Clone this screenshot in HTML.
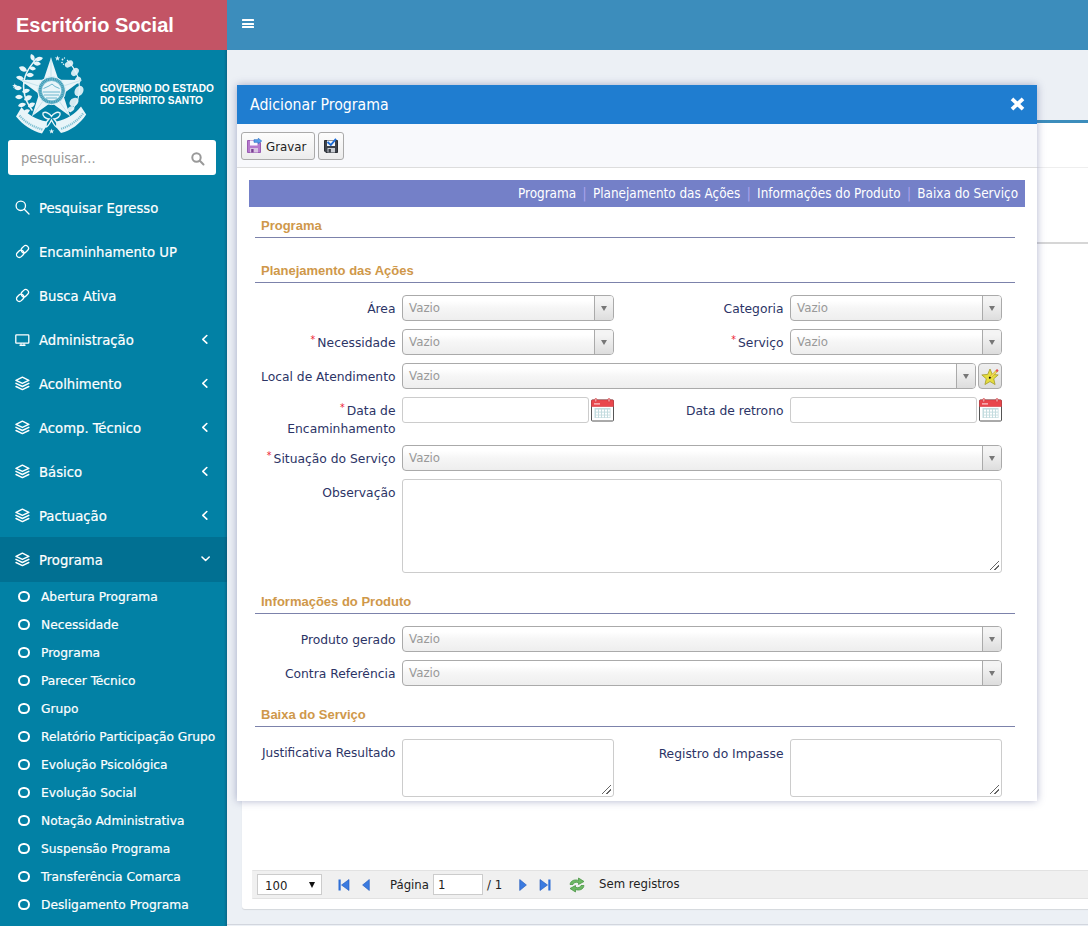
<!DOCTYPE html>
<html lang="pt-br">
<head>
<meta charset="utf-8">
<title>Escritório Social</title>
<style>
*{box-sizing:border-box;margin:0;padding:0}
html,body{width:1088px;height:926px;overflow:hidden}
body{position:relative;background:#ecf0f5;font-family:"DejaVu Sans Condensed","Liberation Sans",sans-serif;font-size:13.5px;color:#333}
.abs{position:absolute}
/* header */
#logo{position:absolute;left:0;top:0;width:227px;height:50px;background:#c35465;color:#fff;font-family:"Liberation Sans",sans-serif;font-weight:bold;font-size:20px;line-height:50px;padding-left:16px;white-space:nowrap}
#navbar{position:absolute;left:227px;top:0;width:861px;height:50px;background:#3c8dbc}
#navbar .bars{position:absolute;left:15px;top:19px;width:12px;height:10px}
#navbar .bars i{display:block;height:2.2px;background:#fff;margin-bottom:1.4px;border-radius:.5px}
/* sidebar */
#sidebar{position:absolute;left:0;top:50px;width:227px;height:876px;background:#0281a5;color:#fff;overflow:hidden}
#gov{position:absolute;left:100px;top:32px;font-family:"Liberation Sans",sans-serif;font-weight:bold;font-size:11.7px;line-height:12px;white-space:nowrap;color:#fff;transform:scaleX(.865);transform-origin:0 0}
#search{position:absolute;left:8px;top:90px;width:208px;height:35px;background:#fff;border-radius:3px}
#search span{position:absolute;left:13px;top:1px;line-height:35px;font-size:14.5px;color:#999}
#search svg{position:absolute;left:182.500px;top:12px}
.mi{position:absolute;left:0;width:227px;height:44px;line-height:44px;font-size:14.7px;white-space:nowrap}
.mi .t{position:absolute;left:39px;top:1px;-webkit-text-stroke:.2px #fff}
.mi svg.ic{position:absolute;left:15px;top:15px}
.mi svg.ch{position:absolute;left:201px;top:17px}
.mi.active{background:#017092;height:45px}
.si{position:absolute;left:0;width:227px;height:28px;line-height:28px;font-size:13.6px;white-space:nowrap}
.si .t{position:absolute;left:41px;top:0;-webkit-text-stroke:.2px #fff;transform:scaleY(.94);transform-origin:0 18.7px}
.si .c{position:absolute;left:18px;top:8.500px;width:11.500px;height:11.500px;border:2.300px solid #fff;border-radius:50%}
/* background box */
#box{position:absolute;left:242px;top:120px;width:900px;height:789px;background:#fff;border-top:3px solid #3c8dbc;border-radius:3px;box-shadow:0 1px 1px rgba(0,0,0,.1)}
#boxline{position:absolute;left:242px;top:242px;width:900px;height:2px;background:#d6d6d6}
#pager{position:absolute;left:252px;top:870px;width:900px;height:29px;background:#f0f0f0;border:1px solid #e2e2e2;border-left-color:#f0f0f0;font-size:13px;color:#222}
#footerline{position:absolute;left:227px;top:924px;width:861px;height:1px;background:#d2d6de}
/* modal */
#modal{position:absolute;left:237px;top:85px;width:800px;height:716px;background:#fff;box-shadow:0 0 8px rgba(60,68,130,.4);overflow:hidden}
#mhead{position:absolute;left:0;top:0;width:800px;height:39px;background:#1f7dd0;color:#fff;font-size:15.7px;line-height:40px;padding-left:13px}
#mtool{position:absolute;left:0;top:39px;width:800px;height:44px;background:#f8f9fc;border-bottom:1px solid #ddd}
.btn{position:absolute;top:8px;height:28px;border:1px solid #aaa;border-radius:3px;background:linear-gradient(#fdfdfd,#ececec);font-size:13.5px;line-height:26px;color:#222}
#mnav{position:absolute;left:12px;top:95px;width:776px;height:27px;background:#7480c8;color:#fff;font-size:13.4px;line-height:27px;text-align:right;padding-right:7px;white-space:nowrap}
#mnav b{font-weight:normal;color:#aca4ee;padding:0 6.4px}
.sec{position:absolute;left:18px;width:760px;height:24px;border-bottom:1px solid #7c82ab;color:#cf984a;font-family:"Liberation Sans",sans-serif;font-weight:bold;font-size:13px;line-height:24px;padding-left:6px;white-space:nowrap}
.lbl{position:absolute;text-align:right;color:#2c3466;font-size:13.7px;line-height:18px;white-space:nowrap;transform:scaleY(.94);transform-origin:0 13.7px}
.lbl em{font-style:normal;color:#e23;font-size:10.5px;line-height:0;position:relative;top:-4px;margin-right:2px}
.sel{position:absolute;height:26px;border:1px solid #aaa;border-radius:4px;background:linear-gradient(#fff 20%,#f6f6f6 50%,#eee 100%);font-family:"DejaVu Sans","Liberation Sans",sans-serif;font-size:11.8px;line-height:24px;color:#999;padding-left:6px;overflow:hidden}
.sel:after{content:"";position:absolute;right:0;top:0;width:18.5px;height:24px;border-left:1px solid #aaa;background:linear-gradient(#f4f4f4 20%,#ddd 100%)}
.sel:before{content:"";position:absolute;right:6.5px;top:10px;border:3.5px solid transparent;border-top:5px solid #777;border-bottom:0;z-index:2}
.inp{position:absolute;border:1px solid #ccc;border-radius:3px;background:#fff}

.ta:after{content:"";position:absolute;right:2px;bottom:2px;width:9px;height:9px;background:linear-gradient(135deg,transparent 0,transparent 46%,#666 46%,#666 54%,transparent 54%,transparent 71%,#666 71%,#666 79%,transparent 79%)}
.starbtn{position:absolute;width:24px;height:26px;border:1px solid #aaa;border-radius:4px;background:linear-gradient(#efefef,#dcdcdc)}
.cal{position:absolute;width:23px;height:23px}
</style>
</head>
<body>
<div id="logo">Escritório Social</div>
<div id="navbar"><div class="bars"><i></i><i></i><i></i></div></div>
<div id="sidebar">
<!--LOGO-->
<svg id="coat" class="abs" style="left:5px;top:0" width="90" height="90" viewBox="0 0 90 90">
<g fill="none" stroke="#e9f5f9" stroke-linecap="round">
<path d="M27 60C18 48 16 34 22 22C25 16 28 13 31 9" stroke-width="1.6"/>
</g>
<path d="M30 10Q35.1 13.4 38 8Q32.9 4.6 30 10z" fill="#e9f5f9"/>
<path d="M28 13Q31.4 17.9 36 14Q32.5 9.1 28 13z" fill="#e9f5f9"/>
<path d="M29 11Q31.4 5.8 26 4Q23.6 9.2 29 11z" fill="#e9f5f9"/>
<path d="M24 18Q26.9 22.4 31 19Q28.1 14.6 24 18z" fill="#e9f5f9"/>
<path d="M22 21Q20.2 14.6 14 17Q15.8 23.4 22 21z" fill="#e9f5f9"/>
<path d="M21 25Q25.0 29.4 29 25Q25.0 20.6 21 25z" fill="#e9f5f9"/>
<path d="M19 29Q16.1 23.6 11 27Q13.9 32.4 19 29z" fill="#e9f5f9"/>
<path d="M18 33Q23.1 36.4 26 31Q20.9 27.6 18 33z" fill="#e9f5f9"/>
<path d="M17 38Q13.0 33.6 9 38Q13.0 42.4 17 38z" fill="#e9f5f9"/>
<path d="M17 42Q22.1 45.4 25 40Q19.9 36.6 17 42z" fill="#e9f5f9"/>
<path d="M18 47Q14.0 42.6 10 47Q14.0 51.4 18 47z" fill="#e9f5f9"/>
<path d="M19 50Q25.2 52.4 27 46Q20.8 43.6 19 50z" fill="#e9f5f9"/>
<path d="M21 54Q15.9 50.6 13 56Q18.1 59.4 21 54z" fill="#e9f5f9"/>
<path d="M23 57Q28.7 58.9 30 53Q24.3 51.1 23 57z" fill="#e9f5f9"/>
<path d="M25 60Q19.9 57.6 18 63Q23.1 65.3 25 60z" fill="#e9f5f9"/>
<ellipse cx="64" cy="14" rx="4.5" ry="3" transform="rotate(-30 64 14)" fill="#e9f5f9" opacity=".9"/>
<ellipse cx="70" cy="22" rx="4.5" ry="3.2" transform="rotate(-50 70 22)" fill="#e9f5f9" opacity=".9"/>
<ellipse cx="73" cy="30" rx="3.5" ry="3" transform="rotate(-70 73 30)" fill="#e9f5f9" opacity=".9"/>
<ellipse cx="74" cy="41" rx="5.5" ry="4.2" transform="rotate(-60 74 41)" fill="#e9f5f9" opacity=".9"/>
<ellipse cx="69" cy="52" rx="5" ry="3.8" transform="rotate(-40 69 52)" fill="#e9f5f9" opacity=".9"/>
<ellipse cx="66" cy="59" rx="3.5" ry="2.5" transform="rotate(-30 66 59)" fill="#e9f5f9" opacity=".9"/>
<path d="M62 10C70 18 76 30 74 44C73 52 69 58 65 62" fill="none" stroke="#e9f5f9" stroke-width="1.1"/>
<polygon points="46.00,7.50 53.41,29.81 76.91,29.96 57.98,43.89 65.10,66.29 46.00,52.60 26.90,66.29 34.02,43.89 15.09,29.96 38.59,29.81" fill="#e9f5f9"/>
<path d="M46 40L46.00 7.50" stroke="#9fd0df" stroke-width=".5"/>
<path d="M46 40L76.91 29.96" stroke="#9fd0df" stroke-width=".5"/>
<path d="M46 40L65.10 66.29" stroke="#9fd0df" stroke-width=".5"/>
<path d="M46 40L26.90 66.29" stroke="#9fd0df" stroke-width=".5"/>
<path d="M46 40L15.09 29.96" stroke="#9fd0df" stroke-width=".5"/>
<circle cx="46.6" cy="40.6" r="14" fill="#7dbfd2" stroke="#e9f5f9" stroke-width="1"/>
<circle cx="46.6" cy="40.6" r="11.6" fill="none" stroke="#3c9ab5" stroke-width="2.6" stroke-dasharray="1.1 0.7"/>
<circle cx="46.6" cy="40.6" r="9.6" fill="#e9f5f9"/>
<path d="M38.5 38.5L44 36L47 34L50 36.500L54.500 38.5M38 42h17M39 45h15M41 48h11" stroke="#5fb0c8" stroke-width=".9" fill="none"/>
<path d="M11 66.5L16.5 57.2C22 64 31 69.500 42 71.500L41.5 76L37 83.500C27 81 18 75 11 66.500z" fill="#e9f5f9"/>
<path d="M81.2 64.5L76 56.500C70 64 62 69.500 51.500 71.500L51 77L56 83C66 80.500 75 74 81.200 64.500z" fill="#e9f5f9"/>
<path d="M14.5 65.5C20 72 28 77 37.5 79.500" fill="none" stroke="#7dbfd2" stroke-width="2.2" stroke-dasharray="1.2 .8"/>
<path d="M78 63.500C73 70.500 65 76 55.500 79" fill="none" stroke="#7dbfd2" stroke-width="2.2" stroke-dasharray="1.2 .8"/>
<path d="M38 63C41 61 45 64 46.500 66.500C48 64 52 61 55 63C56 66 52 69 49 69C51 71 53 74 52 77C50 77 48 73 46.500 70C45 73 43 77 41 77C40 74 42 71 44 69C41 69 37 66 38 63z" fill="none" stroke="#e9f5f9" stroke-width="1.4"/>
<polygon points="52.50,5.60 53.15,7.51 55.16,7.53 53.55,8.74 54.15,10.67 52.50,9.50 50.85,10.67 51.45,8.74 49.84,7.53 51.85,7.51" fill="#e9f5f9"/>
<polygon points="9.80,33.20 10.45,35.11 12.46,35.13 10.85,36.34 11.45,38.27 9.80,37.10 8.15,38.27 8.75,36.34 7.14,35.13 9.15,35.11" fill="#e9f5f9"/>
<polygon points="46.60,78.50 47.25,80.41 49.26,80.43 47.65,81.64 48.25,83.57 46.60,82.40 44.95,83.57 45.55,81.64 43.94,80.43 45.95,80.41" fill="#e9f5f9"/>
<circle cx="57.5" cy="9.500" r=".9" fill="#e9f5f9"/><circle cx="59.500" cy="8" r=".7" fill="#e9f5f9"/><circle cx="57" cy="12.500" r=".8" fill="#e9f5f9"/><circle cx="58.500" cy="14.200" r=".7" fill="#e9f5f9"/>
</svg>
<!--/LOGO-->
<div id="gov">GOVERNO DO ESTADO<br>DO ESPÍRITO SANTO</div>
<div id="search"><span>pesquisar...</span><svg width="14" height="14" viewBox="0 0 14 14" fill="none" stroke="#999" stroke-width="2" stroke-linecap="round"><circle cx="5.500" cy="5.500" r="4.200"/><path d="M8.800 8.800L12.500 12.500"/></svg></div>
<!--SIDE-->
<div class="mi" style="top:135px"><svg class="ic" width="15" height="15" viewBox="0 0 15 15" fill="none" stroke="#fff" stroke-width="1.3" stroke-linecap="round"><circle cx="5.8" cy="5.8" r="4.7"/><path d="M9.3 9.3L14 14"/></svg><span class="t">Pesquisar Egresso</span></div>
<div class="mi" style="top:179px"><svg class="ic" width="15" height="15" viewBox="0 0 15 15" fill="none" stroke="#fff" stroke-width="1.3" stroke-linecap="round"><g transform="rotate(-45 7.5 7.5)"><rect x="0.2" y="4.7" width="8" height="5.6" rx="2.8"/><rect x="6.8" y="4.7" width="8" height="5.6" rx="2.8"/></g></svg><span class="t">Encaminhamento UP</span></div>
<div class="mi" style="top:223px"><svg class="ic" width="15" height="15" viewBox="0 0 15 15" fill="none" stroke="#fff" stroke-width="1.3" stroke-linecap="round"><g transform="rotate(-45 7.5 7.5)"><rect x="0.2" y="4.7" width="8" height="5.6" rx="2.8"/><rect x="6.8" y="4.7" width="8" height="5.6" rx="2.8"/></g></svg><span class="t">Busca Ativa</span></div>
<div class="mi" style="top:267px"><svg class="ic" width="15" height="15" viewBox="0 0 15 15" fill="none" stroke="#fff" stroke-width="1.3" stroke-linejoin="round"><rect x="0.8" y="2.8" width="13" height="8.4" rx="0.6"/><path d="M4.5 13.3h6" stroke-width="1.5"/><path d="M6 11.2v2M9 11.2v2" stroke-width="1"/></svg><span class="t">Administração</span><svg class="ch" style="left:201px;top:17px" width="8" height="10" viewBox="0 0 8 10" fill="none" stroke="#fff" stroke-width="1.600" stroke-linecap="round" stroke-linejoin="round"><path d="M5.800 1.500L1.800 5.300L5.800 9.100"/></svg></div>
<div class="mi" style="top:311px"><svg class="ic" width="15" height="15" viewBox="0 0 15 15" fill="none" stroke="#fff" stroke-width="1.500" stroke-linejoin="round" stroke-linecap="round"><path d="M7.4 1.2L13.8 4.3L7.4 7.4L1 4.3Z"/><path d="M1 7.4L7.4 10.5L13.8 7.4"/><path d="M1 10.5L7.4 13.6L13.8 10.5"/></svg><span class="t">Acolhimento</span><svg class="ch" style="left:201px;top:17px" width="8" height="10" viewBox="0 0 8 10" fill="none" stroke="#fff" stroke-width="1.600" stroke-linecap="round" stroke-linejoin="round"><path d="M5.800 1.500L1.800 5.300L5.800 9.100"/></svg></div>
<div class="mi" style="top:355px"><svg class="ic" width="15" height="15" viewBox="0 0 15 15" fill="none" stroke="#fff" stroke-width="1.500" stroke-linejoin="round" stroke-linecap="round"><path d="M7.4 1.2L13.8 4.3L7.4 7.4L1 4.3Z"/><path d="M1 7.4L7.4 10.5L13.8 7.4"/><path d="M1 10.5L7.4 13.6L13.8 10.5"/></svg><span class="t">Acomp. Técnico</span><svg class="ch" style="left:201px;top:17px" width="8" height="10" viewBox="0 0 8 10" fill="none" stroke="#fff" stroke-width="1.600" stroke-linecap="round" stroke-linejoin="round"><path d="M5.800 1.500L1.800 5.300L5.800 9.100"/></svg></div>
<div class="mi" style="top:399px"><svg class="ic" width="15" height="15" viewBox="0 0 15 15" fill="none" stroke="#fff" stroke-width="1.500" stroke-linejoin="round" stroke-linecap="round"><path d="M7.4 1.2L13.8 4.3L7.4 7.4L1 4.3Z"/><path d="M1 7.4L7.4 10.5L13.8 7.4"/><path d="M1 10.5L7.4 13.6L13.8 10.5"/></svg><span class="t">Básico</span><svg class="ch" style="left:201px;top:17px" width="8" height="10" viewBox="0 0 8 10" fill="none" stroke="#fff" stroke-width="1.600" stroke-linecap="round" stroke-linejoin="round"><path d="M5.800 1.500L1.800 5.300L5.800 9.100"/></svg></div>
<div class="mi" style="top:443px"><svg class="ic" width="15" height="15" viewBox="0 0 15 15" fill="none" stroke="#fff" stroke-width="1.500" stroke-linejoin="round" stroke-linecap="round"><path d="M7.4 1.2L13.8 4.3L7.4 7.4L1 4.3Z"/><path d="M1 7.4L7.4 10.5L13.8 7.4"/><path d="M1 10.5L7.4 13.6L13.8 10.5"/></svg><span class="t">Pactuação</span><svg class="ch" style="left:201px;top:17px" width="8" height="10" viewBox="0 0 8 10" fill="none" stroke="#fff" stroke-width="1.600" stroke-linecap="round" stroke-linejoin="round"><path d="M5.800 1.500L1.800 5.300L5.800 9.100"/></svg></div>
<div class="mi active" style="top:487px"><svg class="ic" width="15" height="15" viewBox="0 0 15 15" fill="none" stroke="#fff" stroke-width="1.500" stroke-linejoin="round" stroke-linecap="round"><path d="M7.4 1.2L13.8 4.3L7.4 7.4L1 4.3Z"/><path d="M1 7.4L7.4 10.5L13.8 7.4"/><path d="M1 10.5L7.4 13.6L13.8 10.5"/></svg><span class="t">Programa</span><svg class="ch" style="left:200px;top:18px" width="11" height="8" viewBox="0 0 11 8" fill="none" stroke="#fff" stroke-width="1.600" stroke-linecap="round" stroke-linejoin="round"><path d="M2 2L5.600 5.500L9.200 2"/></svg></div>
<div class="si" style="top:532px"><i class="c"></i><span class="t">Abertura Programa</span></div>
<div class="si" style="top:560px"><i class="c"></i><span class="t">Necessidade</span></div>
<div class="si" style="top:588px"><i class="c"></i><span class="t">Programa</span></div>
<div class="si" style="top:616px"><i class="c"></i><span class="t">Parecer Técnico</span></div>
<div class="si" style="top:644px"><i class="c"></i><span class="t">Grupo</span></div>
<div class="si" style="top:672px"><i class="c"></i><span class="t">Relatório Participação Grupo</span></div>
<div class="si" style="top:700px"><i class="c"></i><span class="t">Evolução Psicológica</span></div>
<div class="si" style="top:728px"><i class="c"></i><span class="t">Evolução Social</span></div>
<div class="si" style="top:756px"><i class="c"></i><span class="t">Notação Administrativa</span></div>
<div class="si" style="top:784px"><i class="c"></i><span class="t">Suspensão Programa</span></div>
<div class="si" style="top:812px"><i class="c"></i><span class="t">Transferência Comarca</span></div>
<div class="si" style="top:840px"><i class="c"></i><span class="t">Desligamento Programa</span></div>
<!--/SIDE-->
</div>
<div class="abs" style="left:224px;top:50px;width:3px;height:876px;background:linear-gradient(90deg,rgba(20,60,90,0),rgba(20,60,90,.38))"></div>
<div id="box"></div>
<div id="boxline"></div>
<div class="abs" style="left:242px;top:167px;width:900px;height:1px;background:#eee"></div>
<div id="pager">
<div class="abs" style="left:4px;top:3px;width:65px;height:21px;background:#fff;border:1px solid #ccc"><span class="abs" style="left:7px;top:0;line-height:21px">100</span><i class="abs" style="left:51px;top:7px;border:3.5px solid transparent;border-top:6px solid #111;border-bottom:0"></i></div>
<svg class="abs" style="left:85px;top:8px" width="12" height="12" viewBox="0 0 12 12"><rect x="0.5" y="0.5" width="2.2" height="11" fill="#2f6fd6"/><path d="M11 0.5v11L3.5 6z" fill="#3b7be0" stroke="#1f56b8" stroke-width=".6"/></svg>
<svg class="abs" style="left:109px;top:8px" width="8" height="12" viewBox="0 0 8 12"><path d="M7.3 0.5v11L0.6 6z" fill="#3b7be0" stroke="#1f56b8" stroke-width=".6"/></svg>
<span class="abs" style="left:137px;top:0;line-height:27px">Página</span>
<div class="abs" style="left:180px;top:3px;width:50px;height:21px;background:#fff;border:1px solid #ccc"><span class="abs" style="left:4px;top:0;line-height:20px">1</span></div>
<span class="abs" style="left:234px;top:0;line-height:27px">/ 1</span>
<svg class="abs" style="left:266px;top:8px" width="8" height="12" viewBox="0 0 8 12"><path d="M0.7 0.5v11L7.4 6z" fill="#3b7be0" stroke="#1f56b8" stroke-width=".6"/></svg>
<svg class="abs" style="left:286px;top:8px" width="12" height="12" viewBox="0 0 12 12"><rect x="9.3" y="0.5" width="2.2" height="11" fill="#2f6fd6"/><path d="M1 0.5v11L8.5 6z" fill="#3b7be0" stroke="#1f56b8" stroke-width=".6"/></svg>
<svg class="abs" style="left:315px;top:6px" width="18" height="16" viewBox="0 0 18 16"><path d="M2 7.5C2.5 3.5 7 2 10.5 3.5V1L16 4.5L10.5 7.5V5.7C8 4.8 5.5 5.5 5 7.5z" fill="#6db864" stroke="#3f8f3a" stroke-width=".7"/><path d="M16 8.5C15.5 12.5 11 14 7.5 12.5V15L2 11.5L7.5 8.5V10.3C10 11.2 12.500 10.500 13 8.5z" fill="#6db864" stroke="#3f8f3a" stroke-width=".7"/></svg>
<span class="abs" style="left:346px;top:0;line-height:25px">Sem registros</span>
</div>
<div id="footerline"></div>
<div id="modal">
<div id="mhead">Adicionar Programa<svg class="abs" style="left:772.5px;top:11.5px" width="15" height="14" viewBox="0 0 15 14"><path d="M2 1.800L13 12.200M13 1.800L2 12.200" stroke="#fff" stroke-width="3.700" stroke-linecap="butt" stroke-linejoin="round"/></svg></div>
<div id="mtool">
<div class="btn" style="left:4px;width:74px"><svg class="abs" style="left:4px;top:5px" width="16" height="16" viewBox="0 0 16 16"><path d="M1.5 2.5H12l2.500 2.200V14.500H1.500z" fill="#b679cd" stroke="#9a5cb2" stroke-width="1"/><rect x="4" y="2.500" width="7.500" height="5" fill="#fbf6fd"/><rect x="4" y="10" width="8" height="4.500" fill="#d9c3e3"/><rect x="5.200" y="11" width="2.400" height="3.500" fill="#7a3f92"/><path d="M8 1.700h4.300V0.300L15.700 3L12.300 5.700V4.300H8z" fill="#58a0ea" stroke="#2f74c8" stroke-width=".7"/></svg><span class="abs" style="left:24px;top:1px;font-family:'DejaVu Sans','Liberation Sans',sans-serif;font-size:11.8px">Gravar</span></div>
<div class="btn" style="left:81px;width:26px"><svg class="abs" style="left:4px;top:5px" width="16" height="16" viewBox="0 0 16 16"><path d="M1.500 2.500H14.500V14.500H3L1.500 13z" fill="#3e434b" stroke="#2a2e34" stroke-width="1"/><rect x="4" y="2.500" width="8" height="5.500" fill="#f4f6f8"/><rect x="4.500" y="10" width="7.500" height="4.500" fill="#c9cdd3"/><rect x="5.500" y="11" width="2.400" height="3.500" fill="#3a3f46"/><path d="M4.500 4L7.800 7L13 0.800" fill="none" stroke="#1b6bd6" stroke-width="1.900"/></svg></div>
</div>
<div id="mnav">Programa<b>|</b>Planejamento das Ações<b>|</b>Informações do Produto<b>|</b>Baixa do Serviço</div>
<!--FORM-->
<div class="sec" style="top:129px">Programa</div>
<div class="sec" style="top:174px">Planejamento das Ações</div>
<div class="lbl" style="left:8.5px;width:150px;top:214px">Área</div>
<div class="sel" style="left:165px;top:210px;width:212px">Vazio</div>
<div class="lbl" style="left:396.5px;width:150px;top:214px">Categoria</div>
<div class="sel" style="left:553px;top:210px;width:212px">Vazio</div>
<div class="lbl" style="left:8.5px;width:150px;top:248px"><em>*</em>Necessidade</div>
<div class="sel" style="left:165px;top:244px;width:212px">Vazio</div>
<div class="lbl" style="left:396.5px;width:150px;top:248px"><em>*</em>Serviço</div>
<div class="sel" style="left:553px;top:244px;width:212px">Vazio</div>
<div class="lbl" style="left:8.5px;width:150px;top:282px">Local de Atendimento</div>
<div class="sel" style="left:165px;top:278px;width:574px">Vazio</div>
<div class="starbtn" style="left:741px;top:278px"><svg class="abs" style="left:2px;top:4px" width="19" height="18" viewBox="0 0 19 18"><polygon points="9.00,1.00 11.29,6.44 17.18,6.94 12.71,10.81 14.05,16.56 9.00,13.50 3.95,16.56 5.29,10.81 0.82,6.94 6.71,6.44" fill="#e6de3e" stroke="#a9a233" stroke-width=".9" stroke-linejoin="round"/><path d="M9 9.500L16.500 2.200" stroke="#c8a020" stroke-width="2.200"/><path d="M9.600 9L15.600 3.100" stroke="#f4e36a" stroke-width="1.100"/><path d="M15.300 3.400L16.900 1.800" stroke="#e8505a" stroke-width="2.200"/><circle cx="8.800" cy="9.800" r="1" fill="#111"/></svg></div>
<div class="lbl" style="left:8.5px;width:150px;top:316px"><em>*</em>Data de<br><span style="position:relative;top:1.2px">Encaminhamento</span></div>
<div class="inp" style="left:165px;top:312px;width:187px;height:26px"></div>
<div class="cal" style="left:354px;top:313px"><svg width="23" height="24" viewBox="0 0 23 24"><rect x="0.500" y="2" width="22" height="21" rx="1" fill="#fff" stroke="#555" stroke-width="1"/><path d="M0.500 3a1 1 0 0 1 1-1h20a1 1 0 0 1 1 1v5.500h-22z" fill="#e9474d" stroke="#d43a40" stroke-width=".6"/><rect x="3" y="5.300" width="6" height="1.200" fill="#fbd0d2"/><rect x="3.500" y="10" width="16" height="10" fill="#c4dcdf"/><g fill="#fff"><rect x="5" y="11.600" width="2" height="2"/><rect x="8" y="11.600" width="2" height="2"/><rect x="11" y="11.600" width="2" height="2"/><rect x="14" y="11.600" width="2" height="2"/><rect x="17" y="11.600" width="1.800" height="2"/><rect x="5" y="14.600" width="2" height="2"/><rect x="8" y="14.600" width="2" height="2"/><rect x="11" y="14.600" width="2" height="2"/><rect x="14" y="14.600" width="2" height="2"/><rect x="17" y="14.600" width="1.800" height="2"/><rect x="5" y="17.500" width="2" height="1.800"/><rect x="8" y="17.500" width="2" height="1.800"/><rect x="11" y="17.500" width="2" height="1.800"/><rect x="14" y="17.500" width="2" height="1.800"/><rect x="17" y="17.500" width="1.800" height="1.800"/></g><rect x="3.800" y="0.500" width="2" height="3.600" rx="1" fill="#f7b6b8" stroke="#d43a40" stroke-width=".7"/><rect x="17" y="0.500" width="2" height="3.600" rx="1" fill="#f7b6b8" stroke="#d43a40" stroke-width=".7"/></svg></div>
<div class="lbl" style="left:396.5px;width:150px;top:316px">Data de retrono</div>
<div class="inp" style="left:553px;top:312px;width:187px;height:26px"></div>
<div class="cal" style="left:742px;top:313px"><svg width="23" height="24" viewBox="0 0 23 24"><rect x="0.500" y="2" width="22" height="21" rx="1" fill="#fff" stroke="#555" stroke-width="1"/><path d="M0.500 3a1 1 0 0 1 1-1h20a1 1 0 0 1 1 1v5.500h-22z" fill="#e9474d" stroke="#d43a40" stroke-width=".6"/><rect x="3" y="5.300" width="6" height="1.200" fill="#fbd0d2"/><rect x="3.500" y="10" width="16" height="10" fill="#c4dcdf"/><g fill="#fff"><rect x="5" y="11.600" width="2" height="2"/><rect x="8" y="11.600" width="2" height="2"/><rect x="11" y="11.600" width="2" height="2"/><rect x="14" y="11.600" width="2" height="2"/><rect x="17" y="11.600" width="1.800" height="2"/><rect x="5" y="14.600" width="2" height="2"/><rect x="8" y="14.600" width="2" height="2"/><rect x="11" y="14.600" width="2" height="2"/><rect x="14" y="14.600" width="2" height="2"/><rect x="17" y="14.600" width="1.800" height="2"/><rect x="5" y="17.500" width="2" height="1.800"/><rect x="8" y="17.500" width="2" height="1.800"/><rect x="11" y="17.500" width="2" height="1.800"/><rect x="14" y="17.500" width="2" height="1.800"/><rect x="17" y="17.500" width="1.800" height="1.800"/></g><rect x="3.800" y="0.500" width="2" height="3.600" rx="1" fill="#f7b6b8" stroke="#d43a40" stroke-width=".7"/><rect x="17" y="0.500" width="2" height="3.600" rx="1" fill="#f7b6b8" stroke="#d43a40" stroke-width=".7"/></svg></div>
<div class="lbl" style="left:8.5px;width:150px;top:364px"><em>*</em>Situação do Serviço</div>
<div class="sel" style="left:165px;top:360px;width:600px">Vazio</div>
<div class="lbl" style="left:8.5px;width:150px;top:398px">Observação</div>
<div class="inp ta" style="left:165px;top:394px;width:600px;height:94px"></div>
<div class="sec" style="top:505px">Informações do Produto</div>
<div class="lbl" style="left:8.5px;width:150px;top:545px">Produto gerado</div>
<div class="sel" style="left:165px;top:541px;width:600px">Vazio</div>
<div class="lbl" style="left:8.5px;width:150px;top:579px">Contra Referência</div>
<div class="sel" style="left:165px;top:575px;width:600px">Vazio</div>
<div class="sec" style="top:618px">Baixa do Serviço</div>
<div class="lbl" style="left:8.5px;width:150px;top:659px;font-size:13.45px">Justificativa Resultado</div>
<div class="inp ta" style="left:165px;top:654px;width:212px;height:58px"></div>
<div class="lbl" style="left:396.5px;width:150px;top:659px">Registro do Impasse</div>
<div class="inp ta" style="left:553px;top:654px;width:212px;height:58px"></div>
<!--/FORM-->
</div>
</body>
</html>
